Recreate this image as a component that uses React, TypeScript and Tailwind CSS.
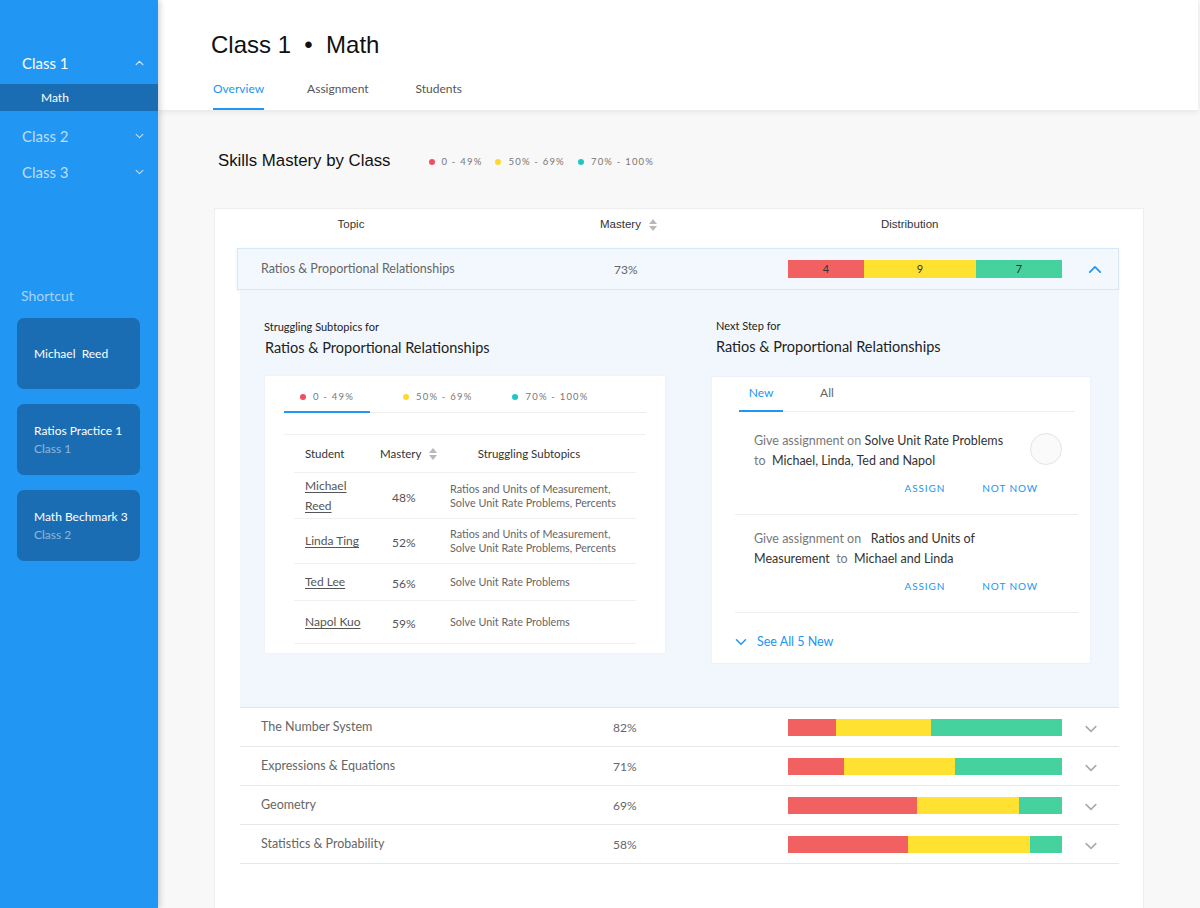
import React from "react";

// colours used by the distribution bars
const RED = "#f26161";
const YELLOW = "#ffe231";
const GREEN = "#45d29f";

type Topic = { name: string; pct: string; seg: [number, number, number] };

const topics: Topic[] = [
  { name: "The Number System", pct: "82%", seg: [48, 95, 131] },
  { name: "Expressions & Equations", pct: "71%", seg: [56, 111, 107] },
  { name: "Geometry", pct: "69%", seg: [129, 102, 43] },
  { name: "Statistics & Probability", pct: "58%", seg: [120, 122, 32] },
];

const students = [
  { name: "Michael Reed", pct: "48%", sub: ["Ratios and Units of Measurement,", "Solve Unit Rate Problems, Percents"], h: "h-[46px]" },
  { name: "Linda Ting", pct: "52%", sub: ["Ratios and Units of Measurement,", "Solve Unit Rate Problems, Percents"], h: "h-[45px]" },
  { name: "Ted Lee", pct: "56%", sub: ["Solve Unit Rate Problems"], h: "h-[37px]" },
  { name: "Napol Kuo", pct: "59%", sub: ["Solve Unit Rate Problems"], h: "h-[43px]" },
];

function Chevron({ up, className }: { up?: boolean; className?: string }) {
  return (
    <svg viewBox="0 0 16 10" className={className} fill="none" stroke="currentColor" strokeWidth="2" strokeLinecap="round" strokeLinejoin="round">
      {up ? <polyline points="2,8 8,2 14,8" /> : <polyline points="2,2 8,8 14,2" />}
    </svg>
  );
}

function SortIcon() {
  return (
    <svg viewBox="0 0 8 12" className="w-[8px] h-[12px] ml-[8px]">
      <polygon points="4,0 8,5 0,5" fill="#b8b8b8" />
      <polygon points="0,7 8,7 4,12" fill="#b8b8b8" />
    </svg>
  );
}

function Dot({ color }: { color: string }) {
  return <span className="inline-block w-[6px] h-[6px] rounded-full" style={{ background: color }} />;
}

function LegendItem({ color, label }: { color: string; label: string }) {
  return (
    <span className="flex items-center gap-[7px]">
      <Dot color={color} />
      <span className="text-[9.5px] leading-[14px] tracking-[1.2px] text-[#777]">{label}</span>
    </span>
  );
}

function Bar({ seg, h, nums }: { seg: [number, number, number]; h: string; nums?: boolean }) {
  const cols = [RED, YELLOW, GREEN];
  const labels = ["4", "9", "7"];
  return (
    <div className={`flex ${h} w-[274px]`}>
      {seg.map((w, i) => (
        <div
          key={i}
          className="flex items-center justify-center text-[11px] text-[#333]"
          style={{ width: w, background: cols[i] }}
        >
          {nums ? labels[i] : null}
        </div>
      ))}
    </div>
  );
}

function Sidebar() {
  return (
    <aside className="relative z-10 w-[158px] shrink-0 h-[908px] bg-[#2196f3] shadow-[2px_0_6px_rgba(0,0,0,0.18)]">
      <div className="pt-[52px]">
        <div className="h-[22px] flex items-center justify-between pl-[22px] pr-[14px] text-[15px] text-white">
          Class 1 <Chevron up className="w-[9px] h-[6px] text-white/80" />
        </div>
        <div className="mt-[10px] h-[27px] flex items-center pl-[41px] pt-[1px] bg-[#1a6db3] text-[12px] text-white">Math</div>
        <div className="mt-[14px] h-[22px] flex items-center justify-between pl-[22px] pr-[14px] text-[15px] text-white/70">
          Class 2 <Chevron className="w-[9px] h-[6px] text-white/70" />
        </div>
        <div className="mt-[14px] h-[22px] flex items-center justify-between pl-[22px] pr-[14px] text-[15px] text-white/70">
          Class 3 <Chevron className="w-[9px] h-[6px] text-white/70" />
        </div>
        <div className="mt-[103px] h-[18px] flex items-center pl-[21px] text-[14px] text-white/60">Shortcut</div>
        <div className="mt-[14px] ml-[17px] w-[123px] flex flex-col gap-[15px]">
          <div className="h-[71px] rounded-[7px] bg-[#1a6db3] flex items-center pl-[17px] text-[12px] text-white">
            Michael&nbsp; Reed
          </div>
          <div className="h-[71px] rounded-[7px] bg-[#1a6db3] flex flex-col justify-center pl-[17px]">
            <span className="text-[12px] text-white leading-[18px]">Ratios Practice 1</span>
            <span className="text-[12px] text-white/50 leading-[18px]">Class 1</span>
          </div>
          <div className="h-[71px] rounded-[7px] bg-[#1a6db3] flex flex-col justify-center pl-[17px]">
            <span className="text-[12px] text-white leading-[18px]">Math Bechmark 3</span>
            <span className="text-[12px] text-white/50 leading-[18px]">Class 2</span>
          </div>
        </div>
      </div>
    </aside>
  );
}

function Header() {
  return (
    <header className="h-[110px] mr-[2px] bg-white shadow-[0_2px_6px_rgba(0,0,0,0.08)] pl-[53px] pt-[30px]">
      <h1 className="text-[24px] leading-[30px] text-[#111] font-['Liberation_Sans',Arial,sans-serif]">
        Class 1 &nbsp;•&nbsp; Math
      </h1>
      <nav className="mt-[21px] ml-[2px] flex text-[12px] leading-[16px]">
        <span className="pb-[11px] border-b-2 border-[#2196f3] text-[#2196f3]">Overview</span>
        <span className="ml-[43px] text-[#555]">Assignment</span>
        <span className="ml-[47px] text-[#555]">Students</span>
      </nav>
    </header>
  );
}

function StrugglingCard() {
  return (
    <div className="w-[400px] h-[277px] bg-white shadow-[0_0_2px_rgba(0,0,0,0.06)]">
      <div className="mx-[19px] flex border-b border-[#eee] pt-[14px]">
        <div className="w-[86px] flex justify-center pb-[7px] border-b-2 border-[#2196f3] -mb-px">
          <LegendItem color="#ef4f64" label="0 - 49%" />
        </div>
        <div className="ml-[33px] pb-[7px]">
          <LegendItem color="#fdd835" label="50% - 69%" />
        </div>
        <div className="ml-[40px] pb-[7px]">
          <LegendItem color="#1fc6c6" label="70% - 100%" />
        </div>
      </div>
      <div className="mt-[21px] mx-[19px] border-t border-[#f0f0f0]">
        <div className="mx-[10px] h-[38px] flex items-center border-b border-[#f0f0f0] text-[11.5px] text-[#333]">
          <span className="w-[86px] pl-[11px]">Student</span>
          <span className="w-[60px] flex items-center">
            Mastery <SortIcon />
          </span>
          <span className="w-[178px] text-center">Struggling Subtopics</span>
        </div>
        {students.map((s) => (
          <div key={s.name} className={`mx-[10px] ${s.h} flex items-center border-b border-[#f0f0f0]`}>
            <span className="w-[86px] pl-[11px]">
              <span className="block w-[64px] text-[12px] leading-[20px] text-[#555] underline underline-offset-2">
                {s.name}
              </span>
            </span>
            <span className="w-[60px] pl-[12px] text-[12px] text-[#555] mt-[4px]">{s.pct}</span>
            <span className="pl-[10px] text-[10.8px] leading-[14px] text-[#666]">
              {s.sub.map((l) => (
                <span key={l} className="block">
                  {l}
                </span>
              ))}
            </span>
          </div>
        ))}
      </div>
    </div>
  );
}

function NextStepItem({ lines, circle, pt }: { lines: React.ReactNode[]; circle?: boolean; pt: string }) {
  return (
    <div className={`ml-[23px] mr-[12px] border-b border-[#eee] ${pt} pb-[19px] pl-[19px] pr-[40px]`}>
      <div className="flex justify-between">
        <div className="text-[12.5px] leading-[20px] text-[#333]">
          {lines.map((l, i) => (
            <div key={i}>{l}</div>
          ))}
        </div>
        {circle && (
          <div className="mt-[2px] -mr-[24px] w-[32px] h-[32px] rounded-full border border-[#e4e4e4] bg-[#fafafa]" />
        )}
      </div>
      <div className="mt-[10px] flex justify-end gap-[37px] text-[10px] leading-[14px] tracking-[0.9px] text-[#2196f3]">
        <span>ASSIGN</span>
        <span>NOT NOW</span>
      </div>
    </div>
  );
}

function NextStepCard() {
  const g = "text-[#777]";
  return (
    <div className="w-[378px] h-[286px] bg-white shadow-[0_0_2px_rgba(0,0,0,0.06)]">
      <div className="ml-[27px] mr-[15px] flex border-b border-[#eee] pt-[8px] text-[12px] leading-[16px]">
        <span className="w-[44px] text-center pb-[9px] border-b-2 border-[#2196f3] -mb-px text-[#2196f3]">New</span>
        <span className="w-[88px] text-center text-[#666]">All</span>
      </div>
      <NextStepItem
        pt="pt-[19px]"
        circle
        lines={[
          <>
            <span className={g}>Give assignment on </span>Solve Unit Rate Problems
          </>,
          <>
            <span className={g}>to</span>&nbsp; Michael, Linda, Ted and Napol
          </>,
        ]}
      />
      <NextStepItem
        pt="pt-[14px]"
        lines={[
          <>
            <span className={g}>Give assignment on</span>&nbsp;&nbsp; Ratios and Units of
          </>,
          <>
            Measurement&nbsp; <span className={g}>to</span>&nbsp; Michael and Linda
          </>,
        ]}
      />
      <div className="mt-[21px] ml-[23px] flex items-center gap-[10px] text-[12.5px] leading-[16px] text-[#2196f3]">
        <Chevron className="w-[12px] h-[8px]" />
        See All 5 New
      </div>
    </div>
  );
}

function TopicRow({ t }: { t: Topic }) {
  return (
    <div className="h-[39px] flex items-center border-b border-[#e8e8e8]">
      <span className="w-[373px] pl-[21px] text-[12.5px] text-[#666]">{t.name}</span>
      <span className="w-[175px] text-[12px] text-[#666] mt-[2px]">{t.pct}</span>
      <Bar seg={t.seg} h="h-[17px]" />
      <Chevron className="ml-[22px] w-[14px] h-[8px] text-[#aaa] mt-[3px]" />
    </div>
  );
}

export default function App() {
  return (
    <div className="flex w-[1200px] h-[908px] overflow-hidden bg-[#f8f8f8] font-['Lato','Open_Sans',sans-serif]">
      <Sidebar />
      <main className="flex-1">
        <Header />
        <h2 className="mt-[41px] h-[20px] pl-[60px] flex items-center text-[16.8px] leading-[20px] text-[#111] font-['Liberation_Sans',Arial,sans-serif]">
          Skills Mastery by Class
          <span className="ml-[38px] mt-[2px] flex gap-[13px] font-['Lato',sans-serif]">
            <LegendItem color="#ef4f64" label="0 - 49%" />
            <LegendItem color="#fdd835" label="50% - 69%" />
            <LegendItem color="#1fc6c6" label="70% - 100%" />
          </span>
        </h2>

        <section className="mt-[37px] ml-[56px] w-[930px] h-[720px] bg-white border border-[#eee]">
          <div className="h-[39px] pb-[8px] flex items-center text-[11.5px] text-[#333] font-['Liberation_Sans',Arial,sans-serif]">
            <span className="w-[272px] text-center">Topic</span>
            <span className="ml-[113px] flex items-center">
              Mastery <SortIcon />
            </span>
            <span className="ml-[224px]">Distribution</span>
          </div>

          <div className="ml-[22px] w-[882px] h-[42px] flex items-center bg-[#f2f8fd] border border-[#d6e7f6] shadow-[0_1px_3px_rgba(33,150,243,0.12)]">
            <span className="w-[376px] pl-[23px] text-[12.5px] text-[#666]">Ratios & Proportional Relationships</span>
            <span className="w-[174px] text-[12px] text-[#666] mt-[2px]">73%</span>
            <Bar seg={[76, 112, 86]} h="h-[18px]" nums />
            <Chevron up className="ml-[26px] w-[14px] h-[9px] text-[#2196f3]" />
          </div>

          <div className="ml-[25px] w-[879px] h-[418px] bg-[#f1f7fc] border-b border-[#d6e7f6] flex">
            <div className="ml-[25px]">
              <div className="pt-[30px] -ml-[1px] text-[11px] leading-[14px] text-[#222]">Struggling Subtopics for</div>
              <div className="mt-[5px] text-[14.5px] leading-[18px] text-[#222]">Ratios & Proportional Relationships</div>
              <div className="mt-[19px]">
                <StrugglingCard />
              </div>
            </div>
            <div className="ml-[47px]">
              <div className="pt-[29px] pl-[4px] text-[11px] leading-[14px] text-[#222]">Next Step for</div>
              <div className="mt-[5px] pl-[4px] text-[14.5px] leading-[18px] text-[#222]">Ratios & Proportional Relationships</div>
              <div className="mt-[21px]">
                <NextStepCard />
              </div>
            </div>
          </div>

          <div className="ml-[25px] w-[879px]">
            {topics.map((t) => (
              <TopicRow key={t.name} t={t} />
            ))}
          </div>
        </section>
      </main>
    </div>
  );
}
